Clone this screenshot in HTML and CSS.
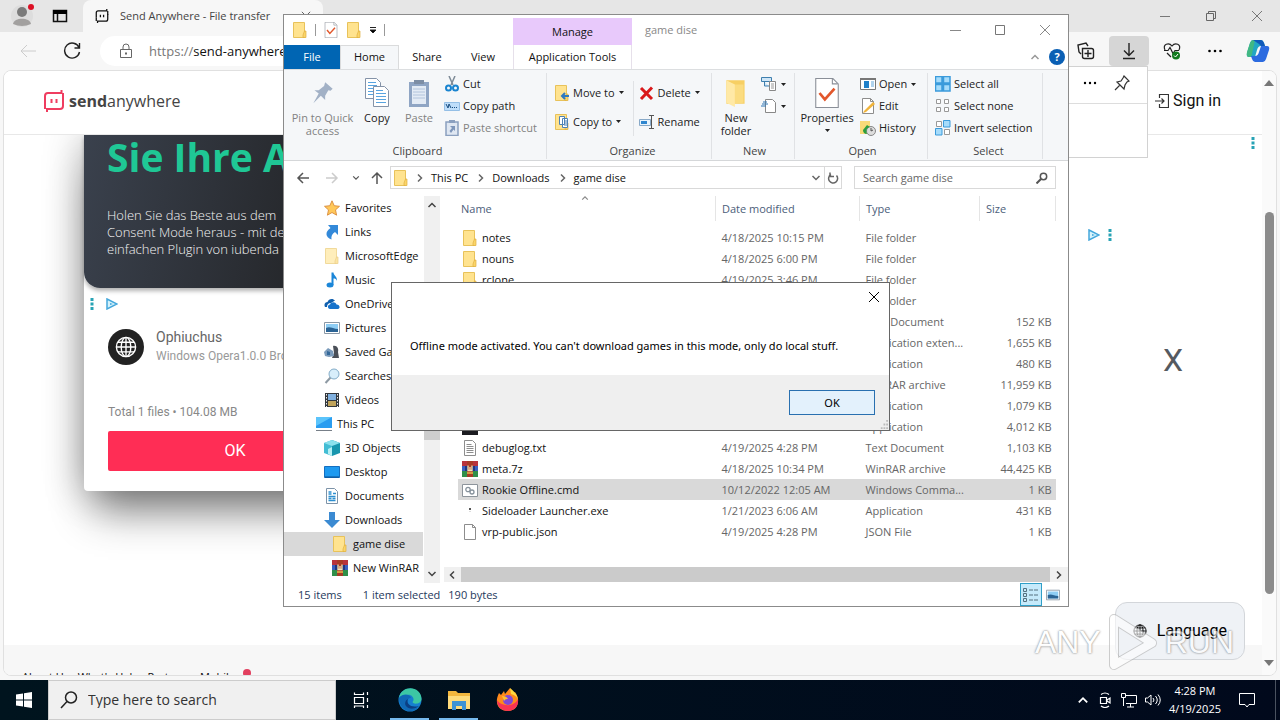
FILE: index.html
```html
<!DOCTYPE html>
<html lang="en">
    <head>
        <meta charset="utf-8">
        <title>Desktop</title>
        <link rel="stylesheet" href="styles.css">
    </head>
    <body>
        <svg class="sprite" aria-hidden="true">
            <symbol id="folder" viewBox="0 0 16 16">
                <path d="M1.500.5h11v15h-11z" fill="#ffe38f" stroke="#e8c25a"/>
                <path d="M12.500 9h1.500v6.500h-3V13z" fill="#fbd569" stroke="#e0b040" stroke-width=".7"/>
            </symbol>
            <symbol id="folder-open" viewBox="0 0 20 26">
                <path d="M1 1h17v22H1z" fill="#f7cf63"/>
                <path d="M1 1l8 4v21l-8-4z" fill="#ffe9a6"/>
                <path d="M9 5h8v17l-8 1z" fill="#fbdc80"/>
            </symbol>
            <symbol id="page-check" viewBox="0 0 22 28">
                <path d="M.5.5h16l5 5v22H.500z" fill="#fff" stroke="#8a8f98"/>
                <path d="M16 .5v5h5" fill="none" stroke="#8a8f98"/>
                <path d="M4 14l5 6 9-10" fill="none" stroke="#e2572c" stroke-width="2.500"/>
            </symbol>
            <symbol id="page" viewBox="0 0 16 16">
                <path d="M2.500.5h8l3 3v12h-11z" fill="#fff" stroke="#8d8d8d"/>
                <path d="M10.500.5v3h3" fill="none" stroke="#8d8d8d"/>
            </symbol>
            <symbol id="text" viewBox="0 0 16 16">
                <path d="M2.500.5h8l3 3v12h-11z" fill="#fff" stroke="#8d8d8d"/>
                <path d="M4.500 4.500h5m-5 2h7m-7 2h7m-7 2h7m-7 2h7" stroke="#8d8d8d"/>
            </symbol>
            <symbol id="doc" viewBox="0 0 16 16">
                <path d="M2.500.5h8l3 3v12h-11z" fill="#fff" stroke="#7d93a8"/>
                <path d="M4.500 4h3m-3 2h3m1.500-.5h3M4.500 8.500h7m-7 2h3m1 0h3m-7 2h7" stroke="#2d8fd0" stroke-width="1.300"/>
            </symbol>
            <symbol id="rar" viewBox="0 0 16 16">
                <path d="M0 0h16v5H0z" fill="#b8323c"/>
                <path d="M0 5h16v5H0z" fill="#3a5fc0"/>
                <path d="M0 10h16v6H0z" fill="#2f8f4a"/>
                <path d="M5 0h6v16H5z" fill="#a83a26"/>
                <path d="M3 5h3v5H3zM10 5h3v5h-3z" fill="#22347e"/>
                <path d="M6 4.500v5h4v-5M8 6v3" fill="none" stroke="#f3e3b5" stroke-width="1.300"/>
                <path d="M5 12h6" stroke="#e5bb4c" stroke-width="1.500"/>
            </symbol>
            <symbol id="cmd" viewBox="0 0 16 16">
                <path d="M.5 2.500h15v12H.500z" fill="#fff" stroke="#8d949b"/>
                <circle cx="6" cy="7.500" r="2.200" fill="none" stroke="#87929c" stroke-width="1.300"/>
                <circle cx="10" cy="10" r="2" fill="none" stroke="#87929c" stroke-width="1.300"/>
            </symbol>
            <symbol id="app" viewBox="0 0 16 16">
                <path d="M7 5h2v2H7z" fill="#555"/><path d="M7.500 8h1v1h-1z" fill="#bbb"/>
            </symbol>
            <symbol id="app-dark" viewBox="0 0 16 16"><path d="M0 0h16v16H0z" fill="#1b1b20"/></symbol>
            <symbol id="star" viewBox="0 0 16 16">
                <path d="M8 .8l2.200 4.900 5.300.6-4 3.600 1.100 5.300L8 12.500l-4.600 2.700 1.100-5.300-4-3.600 5.300-.6z" fill="#ffc85a" stroke="#d98a3a" stroke-width=".9"/>
            </symbol>
            <symbol id="link" viewBox="0 0 16 16">
                <path d="M4 1h10v10l-3-3c-3 2-4 4-3.500 7.500C1 13 1 7.500 6.500 4z" fill="#3389d9"/>
            </symbol>
            <symbol id="music" viewBox="0 0 16 16">
                <ellipse cx="6" cy="13" rx="3.500" ry="2.500" fill="#1b86d8"/>
                <path d="M7.500.5h2c0 3 4 4 3.500 8.500-.5-2-2-2.500-3.500-2.500V13h-2z" fill="#1b86d8"/>
            </symbol>
            <symbol id="cloud" viewBox="0 0 16 16">
                <path d="M1 11c-1.500-3 .5-5 2.500-5C4.500 2.500 9 2 11 4.500L7 7c-3 0-4 2-4 4z" fill="#0f5fae"/>
                <path d="M6 13c-3-.5-2.500-4.500 0-4.500C7 5.500 11.500 5.500 12.500 8.500c3.500 0 4 4 1.500 4.500z" fill="#1673cc"/>
            </symbol>
            <symbol id="picture" viewBox="0 0 16 16">
                <path d="M.5 2.500h15v11H.500z" fill="#fff" stroke="#8a98a6"/>
                <path d="M2 4h12v8H2z" fill="#8ecdf4"/><path d="M2 8c4-2 7 1 12 1v3H2z" fill="#2a6394"/>
            </symbol>
            <symbol id="games" viewBox="0 0 16 16">
                <path d="M9 2c4-1 6 3 5 6l1 6H8l2-5z" fill="#4a4f57"/>
                <path d="M0 8l4-4 5 3 1 5-5 1-4-1z" fill="#7b9bbb"/><path d="M3 7l3 1v3H3z" fill="#35699a"/>
            </symbol>
            <symbol id="lens" viewBox="0 0 16 16">
                <path d="M7 9l-5.500 6" stroke="#8d99a3" stroke-width="2"/>
                <circle cx="10" cy="6" r="5" fill="#d8eefb" stroke="#83acc8"/>
            </symbol>
            <symbol id="video" viewBox="0 0 16 16">
                <path d="M1 1h14v14H1z" fill="#32373d"/><path d="M4 2h8v6H4z" fill="#80b0df"/><path d="M4 9h8v5H4z" fill="#c0a35a"/>
                <path d="M2.500 2v13M13.500 2v13" stroke="#eee" stroke-dasharray="1.500 1.500"/>
            </symbol>
            <symbol id="pc" viewBox="0 0 16 16">
                <path d="M0 1h16v11H0z" fill="#2a9df0"/><path d="M0 1h16L0 10z" fill="#5bc4fb"/><path d="M0 14.500h16" stroke="#777f88"/>
            </symbol>
            <symbol id="cube" viewBox="0 0 16 16">
                <path d="M0 3l8-3v16l-8-3z" fill="#43bdd4"/><path d="M8 0l8 3v10l-8 3z" fill="#1796ae"/><path d="M0 3l8-3 8 3-8 3z" fill="#8be1ed"/><path d="M4 9l4-2v9l-4-2z" fill="#b5f0f5"/>
            </symbol>
            <symbol id="screen" viewBox="0 0 16 16">
                <path d="M.5 2.500h15v11H.500z" fill="#1e9af0" stroke="#146fc1"/><path d="M1 13h14" stroke="#0b4f8e"/>
            </symbol>
            <symbol id="down" viewBox="0 0 16 16"><path d="M5 0h6v8h5l-8 8-8-8h5z" fill="#3b8ad2"/></symbol>
            <symbol id="globe" viewBox="0 0 16 16">
                <g fill="none" stroke="currentColor"><circle cx="8" cy="8" r="7"/><ellipse cx="8" cy="8" rx="3.500" ry="7"/><path d="M1 8h14M8 1v14M2 4.500h12M2 11.500h12"/></g>
            </symbol>
            <symbol id="send" viewBox="0 0 20 22">
                <g fill="none" stroke="currentColor" stroke-width="2"><path d="M1 13V6q0-3 3-3h13.500V0"/><path d="M19 8v8q0 3-3 3H3v3"/><path d="M19 3v6M1 19v-6"/><path d="M7.500 9v4m5-4v4"/></g>
            </symbol>
            <symbol id="ad" viewBox="0 0 12 12">
                <path d="M1 1l10 5-10 5z" fill="#d5f2fb" stroke="#46a8dc" stroke-width="1.500"/><path d="M4 5l3 1-3 1z" fill="#46a8dc"/>
            </symbol>
            <symbol id="dots" viewBox="0 0 4 12"><path d="M.5 0h3v3h-3zM.5 4.500h3v3h-3zM.5 9h3v3h-3z" fill="#28a3b5"/></symbol>
            <symbol id="caret" viewBox="0 0 5 3"><path d="M0 0h5L2.500 3z" fill="currentColor"/></symbol>
            <symbol id="chev" viewBox="0 0 10 10"><path d="M1.500 3L5 6.500 8.500 3" fill="none" stroke="currentColor" stroke-width="1.500"/></symbol>
            <symbol id="arrow" viewBox="0 0 14 14"><path d="M7 2L2 7l5 5M2 7h11" fill="none" stroke="currentColor" stroke-width="1.500"/></symbol>
            <symbol id="close" viewBox="0 0 12 12"><path d="M1 1l10 10M11 1L1 11" stroke="currentColor"/></symbol>
        </svg>

        <div class="desktop">
            <main class="workspace">
                <section class="browser">
                    <div class="tab-strip">
                        <svg class="profile" viewBox="0 0 24 24"><circle cx="12" cy="12" r="11" fill="#ddd"/><circle cx="12" cy="8" r="5" fill="#7b7b7b"/><path d="M3 20c1-7 17-7 18 0q-9 4-18 0z" fill="#a2a09f"/><circle cx="21" cy="3" r="3" fill="#dc1025"/></svg>
                        <svg class="i16" viewBox="0 0 16 16"><path d="M1.500 2.500h13v11h-13zM5.500 6v8" fill="none" stroke="#111" stroke-width="1.500"/><path d="M1 2h14v4H1z"/></svg>
                        <div class="tab">
                            <svg class="i14"><use href="#send"/></svg>
                            <span>Send Anywhere - File transfer</span>
                            <svg class="i10"><use href="#close"/></svg>
                        </div>
                        <div class="window-controls">
                            <svg class="i12" viewBox="0 0 12 12"><path d="M1 6.500h10" stroke="#777"/></svg>
                            <svg class="i12" viewBox="0 0 12 12"><path d="M1.500 3.500h7v7h-7zM3.500 3V1.500h7v7H9" fill="none" stroke="#666"/></svg>
                            <svg class="i12"><use href="#close"/></svg>
                        </div>
                    </div>
                    <div class="toolbar">
                        <svg class="i18 faded" viewBox="0 0 18 18"><path d="M8 3L2 9l6 6M2 9h15" fill="none" stroke="currentColor"/></svg>
                        <svg class="i18" viewBox="0 0 18 18"><path d="M16 5.500A7.500 7.500 0 1 0 16.500 10M16.500 1v5h-5" fill="none" stroke="#222" stroke-width="1.400"/></svg>
                        <div class="address">
                            <svg class="i16" viewBox="0 0 16 16"><path d="M2.500 6.500h11v8h-11zM5 6V4q0-3 3-3t3 3v2" fill="none" stroke="#666"/><path d="M7 9.500h2v2H7z" fill="#666"/></svg>
                            <span><i>https://</i>send-anywhere.com</span>
                        </div>
                        <div class="actions">
                            <button aria-label="Collections"><svg class="i18" viewBox="0 0 18 18"><path d="M4 12l-2-2-1-7 8-2 2 3M5.500 6.500h9q2 0 2 2v6q0 2-2 2h-7q-2 0-2-2zM11 8v7M7.500 11.500h7" fill="none" stroke="#222" stroke-width="1.400"/></svg></button>
                            <button class="pressed" aria-label="Downloads"><svg class="i18" viewBox="0 0 18 18"><path d="M9 1v12M4 8.500l5 5 5-5M3 16.500h12" fill="none" stroke="#222" stroke-width="1.400"/></svg></button>
                            <button aria-label="Performance"><svg class="i18" viewBox="0 0 18 18"><path d="M2 8C-1 2 6 0 9 4c3-4 10-2 7 4M4 11l4 4M1 8.500h4l2-3 3 6 2-3h4" fill="none" stroke="#222" stroke-width="1.200"/><circle cx="13" cy="13.500" r="4" fill="#117a1e"/><path d="M11 13.500l1.500 1.500 2.500-3" fill="none" stroke="#fff"/></svg></button>
                            <button aria-label="Menu"><svg class="i18" viewBox="0 0 18 18"><circle cx="3.500" cy="9" r="1.300"/><circle cx="9" cy="9" r="1.300"/><circle cx="14.500" cy="9" r="1.300"/></svg></button>
                            <button aria-label="Copilot"><svg class="i24" viewBox="0 0 24 24"><path d="M7 1h8q2 0 3 3l1 3h-4q-3 0-4 4l-2 7H3q-3 0-2-4L4 4q1-3 3-3z" fill="#22a6c4"/><path d="M1 13L4 4q1-3 3-3h2L6 15l-1 3H3q-3 0-2-5z" fill="#41b883"/><path d="M17 23H9q-2 0-3-3l-1-3h4q3 0 4-4l2-6h6q3 0 2 4l-3 9q-1 3-3 3z" fill="#2c6be0"/><path d="M7 1h8q2 0 3 3l1 3h-4l-2-2z" fill="#1059b9"/></svg></button>
                        </div>
                    </div>
                    <div class="viewport">
                        <div class="page">
                            <header class="site-header">
                                <a class="brand" href="#"><svg class="brand-mark"><use href="#send"/></svg><span><b>send</b>anywhere</span></a>
                                <a class="sign-in" href="#"><svg class="i14" viewBox="0 0 14 14"><path d="M4.500 4V.5h9v13h-9V10M0 7h9M6.500 4.500L9 7 6.500 9.500" fill="none" stroke="#333" stroke-width="1.200"/></svg>Sign in</a>
                            </header>
                            <div class="site-body">
                                <article class="card">
                                    <div class="ad">
                                        <h2>Sie Ihre Ads</h2>
                                        <p>Holen Sie das Beste aus dem Consent Mode heraus - mit dem einfachen Plugin von iubenda</p>
                                    </div>
                                    <div class="ad-marks"><svg class="dots"><use href="#dots"/></svg><svg class="i12"><use href="#ad"/></svg></div>
                                    <div class="device">
                                        <span class="avatar"><svg class="i22"><use href="#globe"/></svg></span>
                                        <div><strong>Ophiuchus</strong><small>Windows Opera1.0.0 Browser</small></div>
                                    </div>
                                    <p class="total">Total 1 files • 104.08 MB</p>
                                    <button class="confirm">OK</button>
                                </article>
                                <svg class="dots side-dots"><use href="#dots"/></svg>
                                <div class="side-ad"><svg class="i12"><use href="#ad"/></svg><svg class="dots"><use href="#dots"/></svg></div>
                                <span class="big-x">X</span>
                            </div>
                            <footer class="site-footer"><span>About Us · What's Help · Partners · Mobile</span><i></i></footer>
                        </div>
                        <div class="page-scroll"><svg class="i10"><use href="#caret"/></svg><span></span><svg class="i10"><use href="#caret"/></svg></div>
                        <button class="language"><svg class="i14"><use href="#globe"/></svg>Language</button>
                    </div>
                    <div class="downloads">
                        <div>
                            <svg class="i14" viewBox="0 0 14 14"><circle cx="2" cy="7" r="1.200"/><circle cx="7" cy="7" r="1.200"/><circle cx="12" cy="7" r="1.200"/></svg>
                            <svg class="i16" viewBox="0 0 16 16"><path d="M10 1l5 5-2 1-2 3-1 4-7-7 4-1 2-3zM5.500 10.500L1 15" fill="none" stroke="#333" stroke-width="1.200"/></svg>
                        </div>
                    </div>
                </section>

                <section class="explorer">
                    <header class="title-area">
                        <div class="title-left">
                            <div class="quick">
                                <svg class="i16"><use href="#folder"/></svg><i></i>
                                <svg class="i16"><use href="#page-check"/></svg>
                                <svg class="i16"><use href="#folder"/></svg>
                                <svg class="i8" viewBox="0 0 8 8"><path d="M1 1.500h6M1 4h6L4 7z" stroke="#222"/></svg><i></i>
                            </div>
                            <nav class="tabs"><a class="file" href="#">File</a><a class="active" href="#">Home</a><a href="#">Share</a><a href="#">View</a></nav>
                        </div>
                        <div class="context-tab"><span>Manage</span><a href="#">Application Tools</a></div>
                        <div class="title-right">
                            <span class="caption">game dise</span>
                            <div class="caption-buttons">
                                <svg class="i12" viewBox="0 0 12 12"><path d="M1 6.500h11" stroke="#888"/></svg>
                                <svg class="i12" viewBox="0 0 12 12"><path d="M1.500 1.500h9v9h-9z" fill="none" stroke="#777"/></svg>
                                <svg class="i12"><use href="#close"/></svg>
                            </div>
                            <div class="help"><svg class="i10 flip"><use href="#chev"/></svg><button>?</button></div>
                        </div>
                    </header>

                    <div class="ribbon">
                        <div class="group g-clipboard">
                            <div class="tools">
                                <button class="big off w66"><svg viewBox="0 0 24 28"><path d="M14 4l7 6-2 2-2-.500-3 5v4l-4-4-7 7 5-9-4-3h4l5-4z" fill="#a2b1c6"/></svg>Pin to Quick access</button>
                                <button class="big w42"><svg viewBox="0 0 26 30"><g fill="#fff" stroke="#8493a8"><path d="M1.500.5h11l4 4v16h-15z"/><path d="M9.500 8.500h11l4 4v16h-15z"/></g><path d="M4 4.500h8m-8 3h9m-9 3h5m-5 3h5m-5 3h5m3-4h7m-7 3h10m-10 3h10m-10 3h10m-10 3h10" stroke="#58a4e0"/></svg>Copy</button>
                                <button class="big off w42"><svg viewBox="0 0 24 30"><path d="M2 4h20v25H2z" fill="#8fa5c4"/><path d="M5 8h14v18H5z" fill="#e3ebf5"/><path d="M7 2h10v4H7z" fill="#7d8ea5"/><path d="M6 11h12M6 14h12M6 17h12M6 20h12" stroke="#b2c4dc"/></svg>Paste</button>
                                <div class="stack">
                                    <button><svg viewBox="0 0 16 16"><path d="M5 0l4 9M11 0L7 9" stroke="#7e8b98" stroke-width="1.500"/><circle cx="4.500" cy="12" r="2.500" fill="none" stroke="#1984d0" stroke-width="2"/><circle cx="11.500" cy="12" r="2.500" fill="none" stroke="#1984d0" stroke-width="2"/></svg>Cut</button>
                                    <button><svg viewBox="0 0 16 16"><path d="M.5 4.500h15v8H.500z" fill="#bfdefa" stroke="#94bfe6"/><path d="M2 6l2 4 1-4 2 4m1-.5h1m1 0h1m1 0h1" fill="none" stroke="#164c80"/></svg>Copy path</button>
                                    <button class="off"><svg viewBox="0 0 16 16"><path d="M2 2h12v13.500H2z" fill="#dfe7f2" stroke="#8ba0bf" stroke-width="1.500"/><path d="M5 0h6v3H5z" fill="#8ba0bf"/><path d="M6 6h5v5L9.500 9.500 7 13 5.500 11 8 8z" fill="#7e96ba"/></svg>Paste shortcut</button>
                                </div>
                            </div>
                            <span>Clipboard</span>
                        </div>
                        <div class="group g-organize">
                            <div class="tools">
                                <div class="stack tall">
                                    <button><svg viewBox="0 0 16 16"><use href="#folder"/><path d="M15 11H8m3-3l-3 3 3 3" fill="none" stroke="#2f79c0" stroke-width="2"/></svg>Move to<svg class="caret"><use href="#caret"/></svg></button>
                                    <button><svg viewBox="0 0 16 16"><use href="#folder"/><path d="M5.500 2.500h5v8h-5zM8.500 4.500h5v9h-5z" fill="#fff" stroke="#4e82b5"/><path d="M10 7h3m-3 2h3m-3 2h3" stroke="#4e82b5"/></svg>Copy to<svg class="caret"><use href="#caret"/></svg></button>
                                </div>
                                <i class="rule"></i>
                                <div class="stack tall">
                                    <button><svg viewBox="0 0 16 16"><path d="M2 3l11 11M13 2.500L2 14" stroke="#d9191b" stroke-width="3"/></svg>Delete<svg class="caret"><use href="#caret"/></svg></button>
                                    <button><svg viewBox="0 0 16 16"><path d="M.5 5.500h11v6H.500z" fill="#e8f3fc" stroke="#88a9c8"/><path d="M2 7h6v3H2z" fill="#2e86cf"/><path d="M10 1.500h5m-5 13h5M12.500 1v13" stroke="#555"/></svg>Rename</button>
                                </div>
                            </div>
                            <span>Organize</span>
                        </div>
                        <div class="group g-new">
                            <div class="tools">
                                <button class="big w42"><svg viewBox="0 0 20 28"><use href="#folder-open" width="20" height="28"/></svg>New folder</button>
                                <div class="stack">
                                    <button aria-label="New item"><svg viewBox="0 0 16 16"><path d="M.5 1.500h10v4H.500zM3.500 6v4H8" fill="#cfe6f7" stroke="#3e7fae"/><path d="M8.500 5.500h6v9h-6z" fill="#fff" stroke="#888"/><path d="M10 8h3m-3 2h3m-3 2h3" stroke="#999"/></svg><svg class="caret"><use href="#caret"/></svg></button>
                                    <button aria-label="Easy access"><svg viewBox="0 0 16 16"><path d="M4.500 1.500h7l3 3v10h-10z" fill="#fff" stroke="#888"/><path d="M1 6h6M0 8h5M2 4h4" stroke="#2e76b5"/></svg><svg class="caret"><use href="#caret"/></svg></button>
                                </div>
                            </div>
                            <span>New</span>
                        </div>
                        <div class="group g-open">
                            <div class="tools">
                                <button class="big w58"><svg><use href="#page-check"/></svg>Properties<svg class="caret"><use href="#caret"/></svg></button>
                                <div class="stack">
                                    <button><svg viewBox="0 0 16 16"><path d="M.5 2.500h15v11H.500z" fill="#fff" stroke="#777"/><path d="M0 2h16v2H0z" fill="#777"/><path d="M4 5h5v7H4z" fill="#1f80c9"/><path d="M11 6h3m-3 2h3m-3 2h3" stroke="#62a8dd"/></svg>Open<svg class="caret"><use href="#caret"/></svg></button>
                                    <button><svg viewBox="0 0 16 16"><use href="#page"/><path d="M4 13l9-9 2 2-9 8-3 1z" fill="#f0b43c"/></svg>Edit</button>
                                    <button><svg viewBox="0 0 16 16"><path d="M0 1h10v13H0z" fill="#f8da79"/><circle cx="11" cy="11" r="4.500" fill="#ddd" stroke="#888"/><path d="M11 8v3l2-1" fill="none" stroke="#555"/><path d="M3 10l4-5 3 2c-4 1-4 4-3 7-3 0-4-2-4-4z" fill="#2b9e3f"/></svg>History</button>
                                </div>
                            </div>
                            <span>Open</span>
                        </div>
                        <div class="group g-select">
                            <div class="tools">
                                <div class="stack">
                                    <button><svg viewBox="0 0 16 16"><path d="M.5.5h6.500v6.500H.500zM8.500.5H15v6.500H8.500zM.5 8.500H7V15H.500zM8.500 8.500H15V15H8.500z" fill="#a6dcfb" stroke="#3b9bdb" stroke-width="1.500"/></svg>Select all</button>
                                    <button><svg viewBox="0 0 16 16"><path d="M1.500 1.500h4v4h-4zM9.500 1.500h4v4h-4zM1.500 9.500h4v4h-4zM9.500 9.500h4v4h-4z" fill="#fff" stroke="#999"/></svg>Select none</button>
                                    <button><svg viewBox="0 0 16 16"><path d="M1.500 1.500h5v5h-5zM9.500 9.500h5v5h-5z" fill="#fff" stroke="#999"/><path d="M8.500.5h6.500v6.500H8.500zM.5 8.500H7V15H.500z" fill="#a6dcfb" stroke="#3b9bdb"/></svg>Invert selection</button>
                                </div>
                            </div>
                            <span>Select</span>
                        </div>
                    </div>

                    <div class="location">
                        <div class="history"><svg class="i14"><use href="#arrow"/></svg><svg class="i14 mirror faded"><use href="#arrow"/></svg><svg class="i8"><use href="#chev"/></svg><svg class="i14 up"><use href="#arrow"/></svg></div>
                        <div class="crumbs">
                            <svg class="i16"><use href="#folder"/></svg>
                            <svg class="i10 right"><use href="#chev"/></svg><a href="#">This PC</a>
                            <svg class="i10 right"><use href="#chev"/></svg><a href="#">Downloads</a>
                            <svg class="i10 right"><use href="#chev"/></svg><a href="#">game dise</a>
                            <svg class="i10 end"><use href="#chev"/></svg>
                            <button aria-label="Refresh"><svg class="i12" viewBox="0 0 12 12"><path d="M9.500 3.500A4.500 4.500 0 1 1 4 2.500M3 .5v4h4" fill="none" stroke="#666" stroke-width="1.500"/></svg></button>
                        </div>
                        <label class="search"><input type="text" placeholder="Search game dise" aria-label="Search game dise"><svg class="i12" viewBox="0 0 12 12"><circle cx="7.500" cy="4.500" r="3.200" fill="none" stroke="#555" stroke-width="1.500"/><path d="M5 7l-4.500 4.500" stroke="#555" stroke-width="2"/></svg></label>
                    </div>

                    <div class="content">
                        <nav class="tree">
                            <a href="#"><svg class="i16"><use href="#star"/></svg>Favorites</a>
                            <a href="#"><svg class="i16"><use href="#link"/></svg>Links</a>
                            <a href="#"><svg class="i16 pale"><use href="#folder"/></svg>MicrosoftEdge</a>
                            <a href="#"><svg class="i16"><use href="#music"/></svg>Music</a>
                            <a href="#"><svg class="i16"><use href="#cloud"/></svg>OneDrive</a>
                            <a href="#"><svg class="i16"><use href="#picture"/></svg>Pictures</a>
                            <a href="#"><svg class="i16"><use href="#games"/></svg>Saved Games</a>
                            <a href="#"><svg class="i16"><use href="#lens"/></svg>Searches</a>
                            <a href="#"><svg class="i16"><use href="#video"/></svg>Videos</a>
                            <a class="root" href="#"><svg class="i16"><use href="#pc"/></svg>This PC</a>
                            <a href="#"><svg class="i16"><use href="#cube"/></svg>3D Objects</a>
                            <a href="#"><svg class="i16"><use href="#screen"/></svg>Desktop</a>
                            <a href="#"><svg class="i16"><use href="#doc"/></svg>Documents</a>
                            <a href="#"><svg class="i16"><use href="#down"/></svg>Downloads</a>
                            <a class="child current" href="#"><svg class="i16"><use href="#folder"/></svg>game dise</a>
                            <a class="child" href="#"><svg class="i16"><use href="#rar"/></svg>New WinRAR</a>
                        </nav>
                        <div class="v-scroll"><svg class="i10 flip"><use href="#chev"/></svg><span></span><svg class="i10"><use href="#chev"/></svg></div>
                        <div class="files">
                            <table>
                                <colgroup><col><col class="c-date"><col class="c-type"><col class="c-size"></colgroup>
                                <thead><tr><th>Name<svg class="i8 sort flip"><use href="#chev"/></svg></th><th>Date modified</th><th>Type</th><th>Size</th></tr></thead>
                                <tbody>
                                    <tr><td><svg class="i16"><use href="#folder"/></svg>notes</td><td>4/18/2025 10:15 PM</td><td>File folder</td><td></td></tr>
                                    <tr><td><svg class="i16"><use href="#folder"/></svg>nouns</td><td>4/18/2025 6:00 PM</td><td>File folder</td><td></td></tr>
                                    <tr><td><svg class="i16"><use href="#folder"/></svg>rclone</td><td>4/19/2025 3:46 PM</td><td>File folder</td><td></td></tr>
                                    <tr><td><svg class="i16"><use href="#folder"/></svg>temp</td><td>4/19/2025 3:46 PM</td><td>File folder</td><td></td></tr>
                                    <tr><td><svg class="i16"><use href="#text"/></svg>changelog.txt</td><td>4/18/2025 6:00 PM</td><td>Text Document</td><td>152 KB</td></tr>
                                    <tr><td><svg class="i16"><use href="#page"/></svg>7z.dll</td><td>4/18/2025 6:00 PM</td><td>Application exten...</td><td>1,655 KB</td></tr>
                                    <tr><td><svg class="i16"><use href="#app"/></svg>7z.exe</td><td>4/18/2025 6:00 PM</td><td>Application</td><td>480 KB</td></tr>
                                    <tr><td><svg class="i16"><use href="#rar"/></svg>dependencies.7z</td><td>4/18/2025 6:00 PM</td><td>WinRAR archive</td><td>11,959 KB</td></tr>
                                    <tr><td><svg class="i16"><use href="#app"/></svg>aria2c.exe</td><td>4/18/2025 6:00 PM</td><td>Application</td><td>1,079 KB</td></tr>
                                    <tr><td><svg class="i16"><use href="#app-dark"/></svg>AndroidSideloader v2.34.exe</td><td>4/19/2025 3:46 PM</td><td>Application</td><td>4,012 KB</td></tr>
                                    <tr><td><svg class="i16"><use href="#text"/></svg>debuglog.txt</td><td>4/19/2025 4:28 PM</td><td>Text Document</td><td>1,103 KB</td></tr>
                                    <tr><td><svg class="i16"><use href="#rar"/></svg>meta.7z</td><td>4/18/2025 10:34 PM</td><td>WinRAR archive</td><td>44,425 KB</td></tr>
                                    <tr class="selected"><td><svg class="i16"><use href="#cmd"/></svg>Rookie Offline.cmd</td><td>10/12/2022 12:05 AM</td><td>Windows Comma...</td><td>1 KB</td></tr>
                                    <tr><td><svg class="i16"><use href="#app"/></svg>Sideloader Launcher.exe</td><td>1/21/2023 6:06 AM</td><td>Application</td><td>431 KB</td></tr>
                                    <tr><td><svg class="i16"><use href="#page"/></svg>vrp-public.json</td><td>4/19/2025 4:28 PM</td><td>JSON File</td><td>1 KB</td></tr>
                                </tbody>
                            </table>
                            <div class="h-scroll"><svg class="i10 left"><use href="#chev"/></svg><span></span><svg class="i10 right"><use href="#chev"/></svg></div>
                        </div>
                    </div>
                    <footer class="status">
                        <span>15 items</span><span>1 item selected</span><span>190 bytes</span>
                        <div class="views">
                            <button class="on" aria-label="Details"><svg class="i16" viewBox="0 0 16 16"><path d="M.5 1.500h3v3h-3zM.5 6.500h3v3h-3zM.5 11.500h3v3h-3zM6 3h4m1 0h4M6 8h4m1 0h4M6 13h4m1 0h4" fill="none" stroke="#54707f"/></svg></button>
                            <button aria-label="Large icons"><svg class="i14"><use href="#picture"/></svg></button>
                        </div>
                    </footer>
                </section>

                <section class="dialog" role="dialog">
                    <button class="dialog-close" aria-label="Close"><svg class="i12"><use href="#close"/></svg></button>
                    <p>Offline mode activated. You can't download games in this mode, only do local stuff.</p>
                    <div class="dialog-footer">
                        <button>OK</button>
                        <svg class="grip" viewBox="0 0 10 10"><path d="M8 0h2v2H8zM5 4h2v2H5zM8 4h2v2H8zM2 8h2v2H2zM5 8h2v2H5zM8 8h2v2H8z" fill="#bbb"/></svg>
                    </div>
                </section>

                <div class="watermark">
                    <span>ANY</span>
                    <svg viewBox="0 0 52 60"><path d="M7 7l38 24L7 53z" fill="none" stroke="#b0b0b0" stroke-width="10" stroke-linejoin="round"/><path d="M7 7l38 24L7 53z" fill="none" stroke="#fff" stroke-width="8" stroke-linejoin="round"/></svg>
                    <span>RUN</span>
                </div>
            </main>

            <footer class="taskbar">
                <button class="start" aria-label="Start"><svg class="i16" viewBox="0 0 16 16"><path d="M0 2.500l7-1v6H0zM8 1.300L16 0v7.500H8zM0 8.500h7v6l-7-1zM8 8.500h8V16l-8-1.300z" fill="#fff"/></svg></button>
                <label class="task-search"><svg class="i18" viewBox="0 0 18 18"><circle cx="11" cy="6.500" r="5.500" fill="none" stroke="#222" stroke-width="1.500"/><path d="M7 10.500L1 17" stroke="#222" stroke-width="1.500"/></svg><input type="text" placeholder="Type here to search" aria-label="Type here to search"></label>
                <button aria-label="Task view"><svg class="i18" viewBox="0 0 18 18"><path d="M2.500 6.500h9v6h-9zM2.500 1.500v2h9v-2M2.500 17v-2h9v2M15.500 1v3m0 3v4m0 3v3" fill="none" stroke="#fff" stroke-width="1.200"/></svg></button>
                <button class="open" aria-label="Edge"><svg class="i24" viewBox="0 0 24 24"><circle cx="12" cy="12" r="11.500" fill="#1680cf"/><path d="M1 10C3-3 23-3 23.500 11c0 5-8 6-9 3 3-3-1-8-5-7-4 0-7 1-8.500 3z" fill="#3cc7a4"/><path d="M1 10c4-5 11-4 12 0-4 0-6 5-2 9s9 0 10 0C14 27 1 23 1 10z" fill="#1068b5"/><path d="M10 11c-2 5 3 9 11 7-3 3-10 4-13 0-2-3 0-6 2-7z" fill="#0b3f84"/></svg></button>
                <button class="open" aria-label="File Explorer"><svg class="i22" viewBox="0 0 22 22"><path d="M0 2h8l2 2h12v16H0z" fill="#f3b73e"/><path d="M0 7h22v13H0z" fill="#ffdc7c"/><path d="M4 12h14v9h-4v-4H8v4H4z" fill="#3d93d4"/></svg></button>
                <button aria-label="Firefox"><svg class="i24" viewBox="0 0 24 24"><path d="M3 5l2 2 3-4 1 3 5-6 3 5 2-1c6 8 3 19-7 19S-2 15 3 5z" fill="#ff8a1c"/><path d="M1 12c3 6 17 8 21-1 1 7-4 12-10 12S1 19 1 12z" fill="#f93354"/><path d="M14 0c5 4 8 8 8 12-1-4-4-5-7-6z" fill="#ffd83e"/><circle cx="12" cy="12" r="5" fill="#8148d8"/><path d="M6 8c3 0 5 1 6 3-3 0-3 1-4 2z" fill="#ffc02e"/></svg></button>
                <div class="tray">
                    <svg class="i12 flip"><use href="#chev"/></svg>
                    <svg class="i16" viewBox="0 0 16 16"><path d="M3.500 5.500h6v6h-6zM10 8l3-2v5l-3-2M4 2.500q4-3 8 0M4 14q4 3 8 0" fill="none" stroke="#fff" stroke-width="1.200"/></svg>
                    <svg class="i16" viewBox="0 0 16 16"><path d="M4 3.500h11.500v8H5M9.500 12v3M6 15h7M.5 1.500h4v4h-4zM2.500 6v8" fill="none" stroke="#fff"/></svg>
                    <svg class="i16" viewBox="0 0 16 16"><path d="M.5 6h2L6 3v10l-3.500-3h-2zM8 6q2 2 0 4M10.500 4q3.500 4 0 8M13 2.500q4.500 5.500 0 11" fill="none" stroke="#fff"/></svg>
                    <time>4:28 PM<br>4/19/2025</time>
                    <svg class="i16 note" viewBox="0 0 16 16"><path d="M.5 1.500h15v11H10L8 15l-2-2.500H.500z" fill="none" stroke="#fff"/></svg>
                </div>
            </footer>
        </div>
    </body>
</html>
```

FILE: styles.css
```css
* {
    box-sizing: border-box;
}
body {
    margin: 0;
    font-family: "Open Sans", "Noto Sans", sans-serif;
    font-size: 11px;
    line-height: 16px;
    color: #111;
}
a {
    color: inherit;
    text-decoration: none;
}
button {
    border: none;
    background: none;
    padding: 0;
    font: inherit;
    color: inherit;
}
input {
    border: none;
    background: none;
    font: inherit;
    padding: 0;
    min-width: 0;
    flex: 1;
}
i {
    font-style: normal;
}
svg {
    flex: none;
    display: block;
}
.sprite {
    display: none;
}
.i8 { width: 8px; height: 8px; }
.i10 { width: 10px; height: 10px; }
.i12 { width: 12px; height: 12px; }
.i14 { width: 14px; height: 14px; }
.i16 { width: 16px; height: 16px; }
.i18 { width: 18px; height: 18px; }
.i22 { width: 22px; height: 22px; }
.i24 { width: 24px; height: 24px; }
.dots { width: 4px; height: 12px; }
.flip { transform: rotate(180deg); }
.right { transform: rotate(-90deg); }
.left { transform: rotate(90deg); }
.up { transform: rotate(90deg); }
.mirror { transform: scaleX(-1); }
.faded { color: #ccc; }
.pale { opacity: .6; }

.desktop {
    display: flex;
    flex-direction: column;
    height: 100vh;
}
.workspace {
    position: relative;
    flex: 1;
    min-height: 0;
    overflow: hidden;
}

/* browser */
.browser {
    isolation: isolate;
    height: 100%;
    display: flex;
    flex-direction: column;
    background: #f7f7f7;
    padding-bottom: 4px;
}
.tab-strip {
    display: flex;
    align-items: center;
    height: 32px;
    background: #e6e6e6;
    padding-left: 10px;
}
.profile {
    width: 24px;
    height: 24px;
    margin-right: 18px;
    overflow: visible;
}
.tab {
    display: flex;
    align-items: center;
    gap: 11px;
    width: 240px;
    height: 32px;
    margin-left: 15px;
    padding: 0 12px;
    background: #f7f7f7;
    border-radius: 8px 8px 0 0;
    color: #444;
}
.tab .i14 {
    color: #111;
}
.tab .i10 {
    margin-left: auto;
}
.window-controls {
    display: flex;
    gap: 34px;
    margin-left: auto;
    padding-right: 17px;
    color: #777;
}
.toolbar {
    display: flex;
    align-items: center;
    height: 38px;
    padding-left: 19px;
    gap: 26px;
}
.address {
    display: flex;
    align-items: center;
    gap: 15px;
    flex: 1;
    height: 30px;
    margin-left: -7px;
    padding-left: 18px;
    border-radius: 15px;
    background: #fff;
    font-size: 13px;
}
.address i {
    color: #777;
}
.actions {
    display: flex;
    align-items: center;
    padding-right: 2px;
}
.actions button {
    display: grid;
    place-items: center;
    width: 40px;
    height: 30px;
    margin-left: 3px;
}
.actions .pressed {
    background: #d6d6d6;
    border-radius: 4px;
}
.viewport {
    position: relative;
    display: flex;
    flex: 1;
    min-height: 0;
    margin: 0 3px;
    border: 1px solid #e0e0e0;
    border-radius: 8px;
    background: #fff;
    overflow: hidden;
    isolation: isolate;
}
.page {
    flex: 1;
    display: flex;
    flex-direction: column;
    min-width: 0;
}
.site-header {
    position: relative;
    z-index: 1;
    display: flex;
    align-items: center;
    justify-content: space-between;
    height: 64px;
    padding: 0 41px 3px 40px;
    border-bottom: 1px solid #e8e8e8;
    background: #fff;
}
.brand {
    display: flex;
    align-items: center;
    gap: 5px;
    font-size: 16px;
    color: #444;
}
.brand b {
    font-weight: 700;
}
.brand-mark {
    width: 20px;
    height: 22px;
    color: #ef3d60;
}
.sign-in {
    display: flex;
    align-items: center;
    gap: 4px;
    font: 16px/20px Roboto, sans-serif;
}
.site-body {
    position: relative;
    flex: 1;
    min-height: 0;
    padding-left: 80px;
}
.card {
    width: 302px;
    background: #fff;
    border-radius: 4px;
    padding-bottom: 20px;
    box-shadow: 0 30px 40px -10px rgba(0, 0, 0, .45), 0 0 40px rgba(0, 0, 0, .3);
    font-family: Roboto, sans-serif;
}
.ad {
    display: flex;
    flex-direction: column;
    justify-content: flex-end;
    height: 153px;
    padding: 0 23px 30px;
    border-radius: 0 0 0 16px;
    background: linear-gradient(100deg, #3a414d, #26282c 70%);
    box-shadow: 0 3px 4px rgba(0, 0, 0, .3);
    color: #f4f4f4;
    font-family: "Open Sans", sans-serif;
}
.ad h2 {
    margin: 0 -23px 27px 0;
    font-size: 39px;
    line-height: 46px;
    color: #1fc795;
}
.ad p {
    margin: 0;
    width: 200px;
    font-size: 13px;
    font-weight: 300;
    line-height: 17px;
}
.ad-marks {
    display: flex;
    align-items: center;
    gap: 12px;
    padding: 10px 7px 12px 6px;
}
.device {
    display: flex;
    align-items: center;
    gap: 12px;
    padding: 6px 24px 0;
}
.avatar {
    display: grid;
    place-items: center;
    width: 36px;
    height: 36px;
    border-radius: 50%;
    background: #222;
    color: #fff;
}
.device strong, .device small {
    display: block;
    font-weight: 400;
    line-height: 19px;
    white-space: nowrap;
}
.device strong {
    font-size: 14px;
    color: #666;
}
.device small {
    font-size: 12px;
    color: #999;
}
.total {
    margin: 38px 24px 11px;
    font-size: 12px;
    color: #888;
}
.confirm {
    display: block;
    width: 254px;
    height: 40px;
    margin: 0 24px;
    border-radius: 2px;
    background: #ff2d55;
    color: #fff;
    font-size: 16px;
}
/* ad controls pinned over the page */
.side-dots {
    position: absolute;
    top: 2px;
    right: 7px;
}
.side-ad {
    position: absolute;
    top: 94px;
    right: 150px;
    display: flex;
    gap: 8px;
}
.big-x {
    position: absolute;
    top: 205px;
    right: 79px;
    font: 32px/40px Roboto, sans-serif;
    color: #555a60;
}
.site-footer {
    display: flex;
    align-items: flex-start;
    gap: 8px;
    height: 30px;
    padding: 24px 18px 0;
    background: #f7f7f7;
    position: relative;
    z-index: 1;
    line-height: 16px;
    white-space: nowrap;
    overflow: hidden;
}
.site-footer i {
    width: 8px;
    height: 8px;
    border-radius: 50%;
    background: #e2405f;
}
.page-scroll {
    display: flex;
    flex-direction: column;
    align-items: center;
    width: 14px;
    padding: 7px 0;
    background: #fafafa;
    color: #777;
}
.page-scroll .i10:first-child {
    transform: rotate(180deg);
}
.page-scroll span {
    flex: 1;
    width: 9px;
    margin: 124px 0 64px;
    border-radius: 5px;
    background: #8b8b8b;
}
.language {
    position: absolute;
    right: 31px;
    bottom: 15px;
    z-index: 2;
    display: flex;
    align-items: center;
    gap: 10px;
    height: 58px;
    padding: 0 17px;
    border: 1px solid #d3d6da;
    border-radius: 12px;
    background: #eff2f6;
    color: #000;
    font: 16px/20px Roboto, sans-serif;
}
.downloads {
    position: absolute;
    top: 66px;
    right: 132px;
    width: 360px;
    height: 92px;
    border: 1px solid #d2d2d2;
    background: #fff;
}
.downloads div {
    display: flex;
    align-items: center;
    justify-content: flex-end;
    gap: 17px;
    height: 37px;
    padding: 0 17px 4px;
    border-bottom: 1px solid #ddd;
}

/* file explorer window */
.explorer {
    position: absolute;
    top: 14px;
    left: 283px;
    right: 211px;
    border: 1px solid #8b8b8b;
    background: #fff;
}
.title-area {
    display: flex;
    height: 54px;
}
.title-left {
    width: 229px;
}
.quick {
    display: flex;
    align-items: center;
    height: 30px;
    padding-left: 8px;
    gap: 7px;
}
.quick i {
    width: 1px;
    height: 12px;
    background: #999;
}
.tabs {
    display: flex;
    height: 24px;
}
.tabs a {
    width: 56px;
    line-height: 24px;
    text-align: center;
}
.tabs .active {
    width: 59px;
    background: #f5f7f9;
    border: 1px solid #dadbdc;
    border-bottom: none;
    line-height: 22px;
}
.tabs .file {
    background: #0065b3;
    color: #fff;
}
.context-tab {
    width: 119px;
    padding-top: 3px;
    text-align: center;
}
.context-tab span, .context-tab a {
    display: block;
    line-height: 27px;
}
.context-tab span {
    background: #e8c9fb;
}
.context-tab a {
    line-height: 24px;
    border: solid #e6e0ea;
    border-width: 0 1px;
    white-space: nowrap;
}
.title-right {
    flex: 1;
    display: grid;
    grid-template-columns: 1fr auto;
    grid-template-rows: 30px 24px;
    align-items: center;
    padding-left: 13px;
}
.caption {
    color: #888;
}
.caption-buttons {
    display: flex;
    gap: 33px;
    padding-right: 17px;
    color: #888;
}
.help {
    grid-column: 2;
    display: flex;
    align-items: center;
    justify-content: flex-end;
    gap: 9px;
    padding-right: 3px;
    color: #999;
}
.help button {
    width: 16px;
    height: 16px;
    border-radius: 50%;
    background: #0a5fb4;
    color: #fff;
    font-weight: 700;
}
.ribbon {
    display: flex;
    height: 92px;
    padding-top: 3px;
    background: #f5f7f9;
    border-top: 1px solid #dcdee0;
    border-bottom: 1px solid #d5d7d9;
}
.group {
    display: flex;
    flex-direction: column;
    justify-content: space-between;
    height: 86px;
    border-right: 1px solid #e0e2e5;
    color: #222;
}
.group > span {
    text-align: center;
    color: #444;
}
.g-clipboard { width: 263px; padding-left: 5px; }
.g-organize { width: 165px; padding-left: 7px; }
.g-new { width: 83px; padding-left: 3px; }
.g-open { width: 133px; padding-left: 3px; }
.g-select { width: 115px; padding-left: 7px; }
.tools {
    display: flex;
}
.big {
    display: flex;
    flex-direction: column;
    align-items: center;
    line-height: 13px;
    padding-top: 5px;
}
.big > svg {
    width: 26px;
    height: 30px;
    margin-bottom: 3px;
}
.w66 { width: 67px; }
.w42 { width: 42px; }
.w58 { width: 58px; }
.off {
    color: #828282;
}
.stack button {
    display: flex;
    align-items: center;
    gap: 3px;
    height: 22px;
    white-space: nowrap;
}
.stack button > svg {
    width: 16px;
    height: 16px;
}
.tools .stack {
    padding-left: 4px;
}
.tools .tall {
    padding: 5px 0 0;
}
.g-select .stack {
    padding-left: 0;
}
.tall button {
    height: 29px;
    padding-right: 7px;
}
.stack button > .caret, .big > .caret {
    width: 5px;
    height: 3px;
    margin: 5px 0 0 1px;
}
.stack button > .caret {
    margin: 0 0 0 1px;
}
.rule {
    width: 1px;
    margin: 8px 5px 0 2px;
    background: #e0e2e5;
}
.location {
    display: flex;
    align-items: center;
    height: 35px;
    padding: 0 12px 2px 0;
    color: #555;
}
.history {
    display: flex;
    align-items: center;
    width: 106px;
    padding-left: 12px;
    gap: 15px;
}
.history .i8 {
    margin: 0 -5px 0 -2px;
}
.crumbs {
    display: flex;
    align-items: center;
    flex: 1;
    height: 23px;
    padding-left: 2px;
    border: 1px solid #d9d9d9;
    gap: 6px;
    color: #666;
}
.crumbs a {
    margin-right: 2px;
    color: #111;
}
.crumbs .end {
    margin-left: auto;
    margin-right: -3px;
}
.crumbs button {
    display: grid;
    place-items: center;
    width: 17px;
    height: 21px;
    border-left: 1px solid #d9d9d9;
}
.search {
    display: flex;
    align-items: center;
    width: 202px;
    height: 23px;
    margin-left: 12px;
    padding: 0 7px 0 8px;
    border: 1px solid #d9d9d9;
}
.search input::placeholder {
    color: #666;
}
.content {
    display: flex;
}
.tree {
    width: 140px;
    padding-bottom: 3px;
    overflow: hidden;
}
.tree a {
    display: flex;
    align-items: center;
    gap: 5px;
    height: 24px;
    margin-right: 1px;
    padding-left: 40px;
    white-space: nowrap;
    overflow: hidden;
}
.tree .root {
    padding-left: 32px;
}
.tree .child {
    padding-left: 48px;
}
.tree .current {
    background: #d9d9d9;
}
.v-scroll {
    display: flex;
    flex-direction: column;
    align-items: center;
    width: 16px;
    padding: 4px 0;
    background: #f0f0f0;
    color: #444;
}
.v-scroll span {
    width: 16px;
    height: 80px;
    margin: 150px 0 auto;
    background: #cdcdcd;
}
.files {
    flex: 1;
    display: flex;
    flex-direction: column;
    min-width: 0;
}
table {
    table-layout: fixed;
    width: auto;
    margin: 0 12px 0 18px;
    border-collapse: collapse;
}
.c-date { width: 144px; }
.c-type { width: 120px; }
.c-size { width: 76px; }
th {
    position: relative;
    height: 28px;
    padding: 0 0 0 6px;
    border-right: 1px solid #e5e5e5;
    text-align: left;
    font-weight: 400;
    color: #4c607a;
}
th:first-child {
    padding-left: 3px;
}
.sort {
    position: absolute;
    top: -2px;
    left: 48%;
    color: #888;
}
thead {
    border-bottom: 6px solid #fff;
}
td {
    height: 21px;
    padding: 0 4px 0 6px;
    color: #666;
    white-space: nowrap;
}
td:first-child {
    display: flex;
    align-items: center;
    gap: 4px;
    padding-left: 4px;
    color: #111;
}
td:last-child {
    text-align: right;
}
.selected {
    background: #d9d9d9;
}
.h-scroll {
    display: flex;
    align-items: center;
    height: 15px;
    margin: auto 0 1px 4px;
    padding: 0 4px 0 3px;
    gap: 4px;
    background: #f0f0f0;
    color: #444;
}
.h-scroll span {
    flex: 1;
    height: 15px;
    background: #cbcbcb;
}
.status {
    display: flex;
    align-items: center;
    height: 23px;
    padding-left: 14px;
    color: #25395c;
}
.status span:nth-child(2) {
    margin: 0 8px 0 21px;
}
.views {
    display: flex;
    margin-left: auto;
    padding-right: 4px;
}
.views button {
    display: grid;
    place-items: center;
    width: 22px;
    height: 23px;
}
.views .on {
    border: 1px solid #2f9fc8;
    background: #c5eafb;
}

/* message box */
.dialog {
    position: absolute;
    top: 282px;
    left: 391px;
    width: 499px;
    border: 1px solid #666;
    background: #fff;
    color: #000;
    font-family: "Noto Sans", "Open Sans", sans-serif;
}
.dialog-close {
    display: block;
    margin: 8px 9px 0 auto;
}
.dialog p {
    margin: 35px 18px 21px;
    white-space: nowrap;
}
.dialog-footer {
    position: relative;
    display: flex;
    justify-content: flex-end;
    padding: 15px 14px;
    background: #efefef;
}
.dialog-footer button {
    width: 86px;
    height: 25px;
    border: 1px solid #2970b0;
    background: #e3f1fc;
}
.grip {
    position: absolute;
    right: 1px;
    bottom: 1px;
    width: 9px;
    height: 9px;
}

.watermark {
    position: absolute;
    right: 46px;
    bottom: 8px;
    display: flex;
    align-items: center;
    gap: 6px;
    font: 32px/40px "Liberation Sans Narrow", "Liberation Sans", sans-serif;
    color: #fff;
    opacity: .6;
    text-shadow: 0 0 2px #555, 0 0 2px #777;
    pointer-events: none;
}
.watermark svg {
    width: 52px;
    height: 60px;
}

/* taskbar */
.taskbar {
    display: flex;
    height: 40px;
    background: linear-gradient(90deg, #00141e, #01091c);
    color: #fff;
}
.taskbar button {
    display: grid;
    place-items: center;
    width: 49px;
}
.taskbar .start {
    width: 48px;
}
.taskbar .open {
    background: linear-gradient(#76b9ed, #76b9ed) center bottom / 39px 2px no-repeat;
}
.task-search {
    display: flex;
    align-items: center;
    gap: 10px;
    width: 288px;
    padding-left: 11px;
    border: 1px solid #ccc;
    background: #f0f0f0;
    font-size: 14px;
}
.task-search input::placeholder {
    color: #333;
}
.tray {
    display: flex;
    align-items: center;
    gap: 8px;
    margin-left: auto;
    margin-right: 4px;
    padding-right: 20px;
    border-right: 1px solid #4a5260;
}
.tray time {
    text-align: center;
    line-height: 18px;
}
.note {
    margin-left: 10px;
}
```
